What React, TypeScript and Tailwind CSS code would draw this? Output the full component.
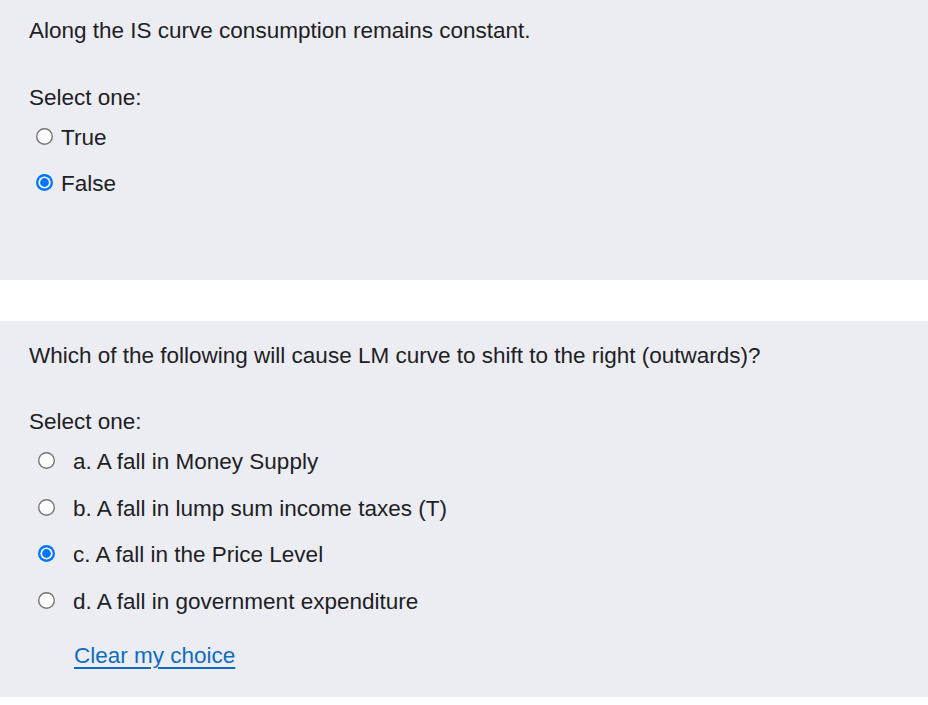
import React from "react";

function Radio({ checked }: { checked?: boolean }) {
  return (
    <svg width="17" height="17" viewBox="0 0 17 17" className="shrink-0 mb-[3px]">
      {checked ? (
        <>
          <circle cx="8.5" cy="8.5" r="8.5" fill="#0075ff" />
          <circle cx="8.5" cy="8.5" r="6.1" fill="#ffffff" />
          <circle cx="8.5" cy="8.5" r="4.4" fill="#0075ff" />
        </>
      ) : (
        <circle cx="8.5" cy="8.5" r="7.8" fill="#ffffff" stroke="#767676" strokeWidth="1.4" />
      )}
    </svg>
  );
}

function Option({ label, checked, wide }: { label: string; checked?: boolean; wide?: boolean }) {
  return (
    <div className={`flex items-center h-[46.5px] leading-[46.5px] ${wide ? "pl-[9px] gap-[18px]" : "pl-[7px] gap-[8px]"}`}>
      <Radio checked={checked} />
      <span>{label}</span>
    </div>
  );
}

export default function App() {
  return (
    <div
      className="w-[928px] h-[705px] bg-white text-[#1d2125] text-[22.5px]"
      style={{ fontFamily: '"Liberation Sans", Arial, sans-serif' }}
    >
      <section className="h-[280px] bg-[#ecedf2] pl-[29px] pt-[15.5px]">
        <div className="h-[30px] leading-[30px]">Along the IS curve consumption remains constant.</div>
        <div className="h-[30px] leading-[30px] mt-[37px]">Select one:</div>
        <div className="mt-[2px]">
          <Option label="True" />
          <Option label="False" checked />
        </div>
      </section>
      <div className="h-[41px]" />
      <section className="h-[376px] bg-[#ecedf2] pl-[29px] pt-[20px]">
        <div className="h-[30px] leading-[30px]">
          Which of the following will cause LM curve to shift to the right (outwards)?
        </div>
        <div className="h-[30px] leading-[30px] mt-[36px]">Select one:</div>
        <div className="mt-[2px]">
          <Option wide label="a. A fall in Money Supply" />
          <Option wide label="b. A fall in lump sum income taxes (T)" />
          <Option wide label="c. A fall in the Price Level" checked />
          <Option wide label="d. A fall in government expenditure" />
        </div>
        <div className="h-[30px] leading-[30px] mt-[16px] pl-[45px]">
          <a href="#" className="text-[#0f6cbf] underline decoration-2 underline-offset-[4px]">
            Clear my choice
          </a>
        </div>
      </section>
    </div>
  );
}
